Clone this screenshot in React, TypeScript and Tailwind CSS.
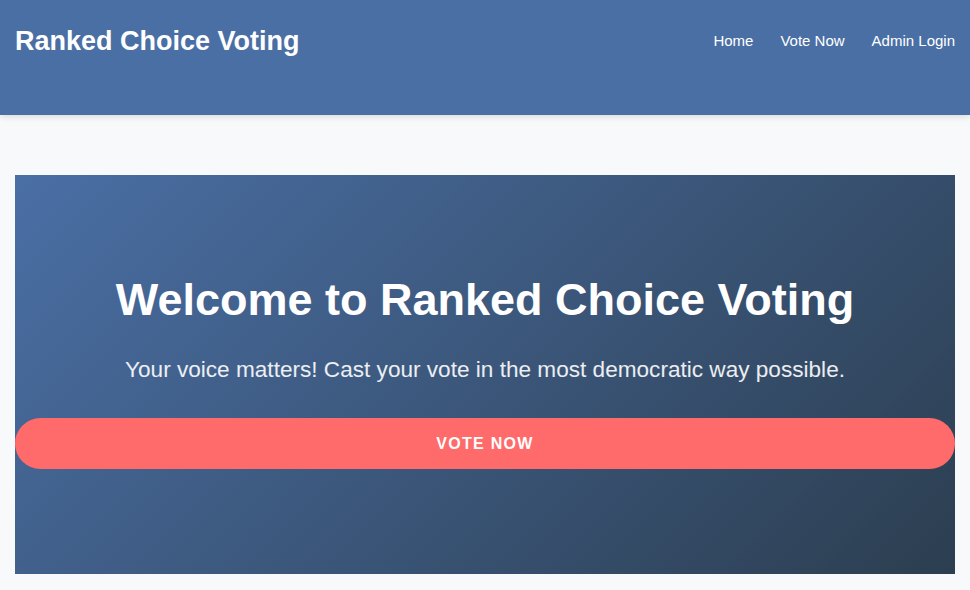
const navLinks = ['Home', 'Vote Now', 'Admin Login'];

function Header() {
  return (
    <header className="h-[115px] bg-[#4a6fa5] shadow-[0_2px_6px_rgba(0,0,0,0.12)] relative z-10">
      <div className="flex items-start justify-between px-[15px] pt-[25px]">
        <h1 className="text-[27px] font-bold leading-[32px] text-white">Ranked Choice Voting</h1>
        <nav className="flex gap-[27px] pt-[7px]">
          {navLinks.map((link) => (
            <a key={link} href="#" className="text-[15px] leading-[18px] text-white">
              {link}
            </a>
          ))}
        </nav>
      </div>
    </header>
  );
}

function Hero() {
  return (
    <section className="mx-[15px] mt-[60px] h-[399px] pt-[99px] flex flex-col items-center bg-[linear-gradient(135deg,#4a6fa5,#2c3e50)] text-white">
      <h2 className="text-[45px] font-bold leading-[52px] text-center">Welcome to Ranked Choice Voting</h2>
      <p className="mt-[31px] text-[22.6px] leading-[26px] text-white/90 text-center">
        Your voice matters! Cast your vote in the most democratic way possible.
      </p>
      <button className="mt-[35px] w-full h-[51px] rounded-full bg-[#ff6b6b] text-[16px] font-bold tracking-[1.3px] text-white">
        VOTE NOW
      </button>
    </section>
  );
}

export default function App() {
  return (
    <div className="min-h-[590px] bg-[#f8f9fa] font-['Liberation_Sans',Arial,sans-serif]">
      <Header />
      <Hero />
    </div>
  );
}
